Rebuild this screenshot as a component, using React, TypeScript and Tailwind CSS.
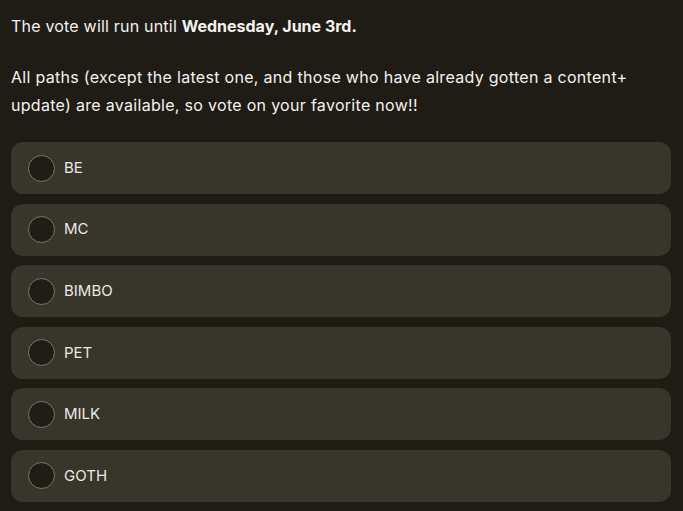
import React from "react";

const options = ["BE", "MC", "BIMBO", "PET", "MILK", "GOTH"];

export default function App() {
  return (
    <div
      className="w-[683px] h-[511px] overflow-hidden bg-[#1f1c16] text-[#f4f2ee] px-[11px] pt-[12px]"
      style={{ fontFamily: "Inter, 'Liberation Sans', sans-serif" }}
    >
      <p className="text-[16px] leading-[28px] tracking-[0.2px]">
        The vote will run until <strong className="font-bold tracking-normal">Wednesday, June 3rd.</strong>
      </p>
      <p className="mt-[23px] text-[16px] leading-[28px] tracking-[0.3px]">
        All paths (except the latest one, and those who have already gotten a content+ update) are
        available, so vote on your favorite now!!
      </p>
      <div className="mt-[23px] flex flex-col gap-[9.6px] w-[660px]">
        {options.map((o) => (
          <div
            key={o}
            className="h-[52px] rounded-[12px] bg-[#38352b] flex items-center pl-[17px] gap-[9px]"
          >
            <span className="w-[27px] h-[27px] rounded-full border border-[#7a776f] bg-[#201d17] shrink-0" />
            <span className="text-[15px] text-[#ece9e2]">{o}</span>
          </div>
        ))}
      </div>
    </div>
  );
}
